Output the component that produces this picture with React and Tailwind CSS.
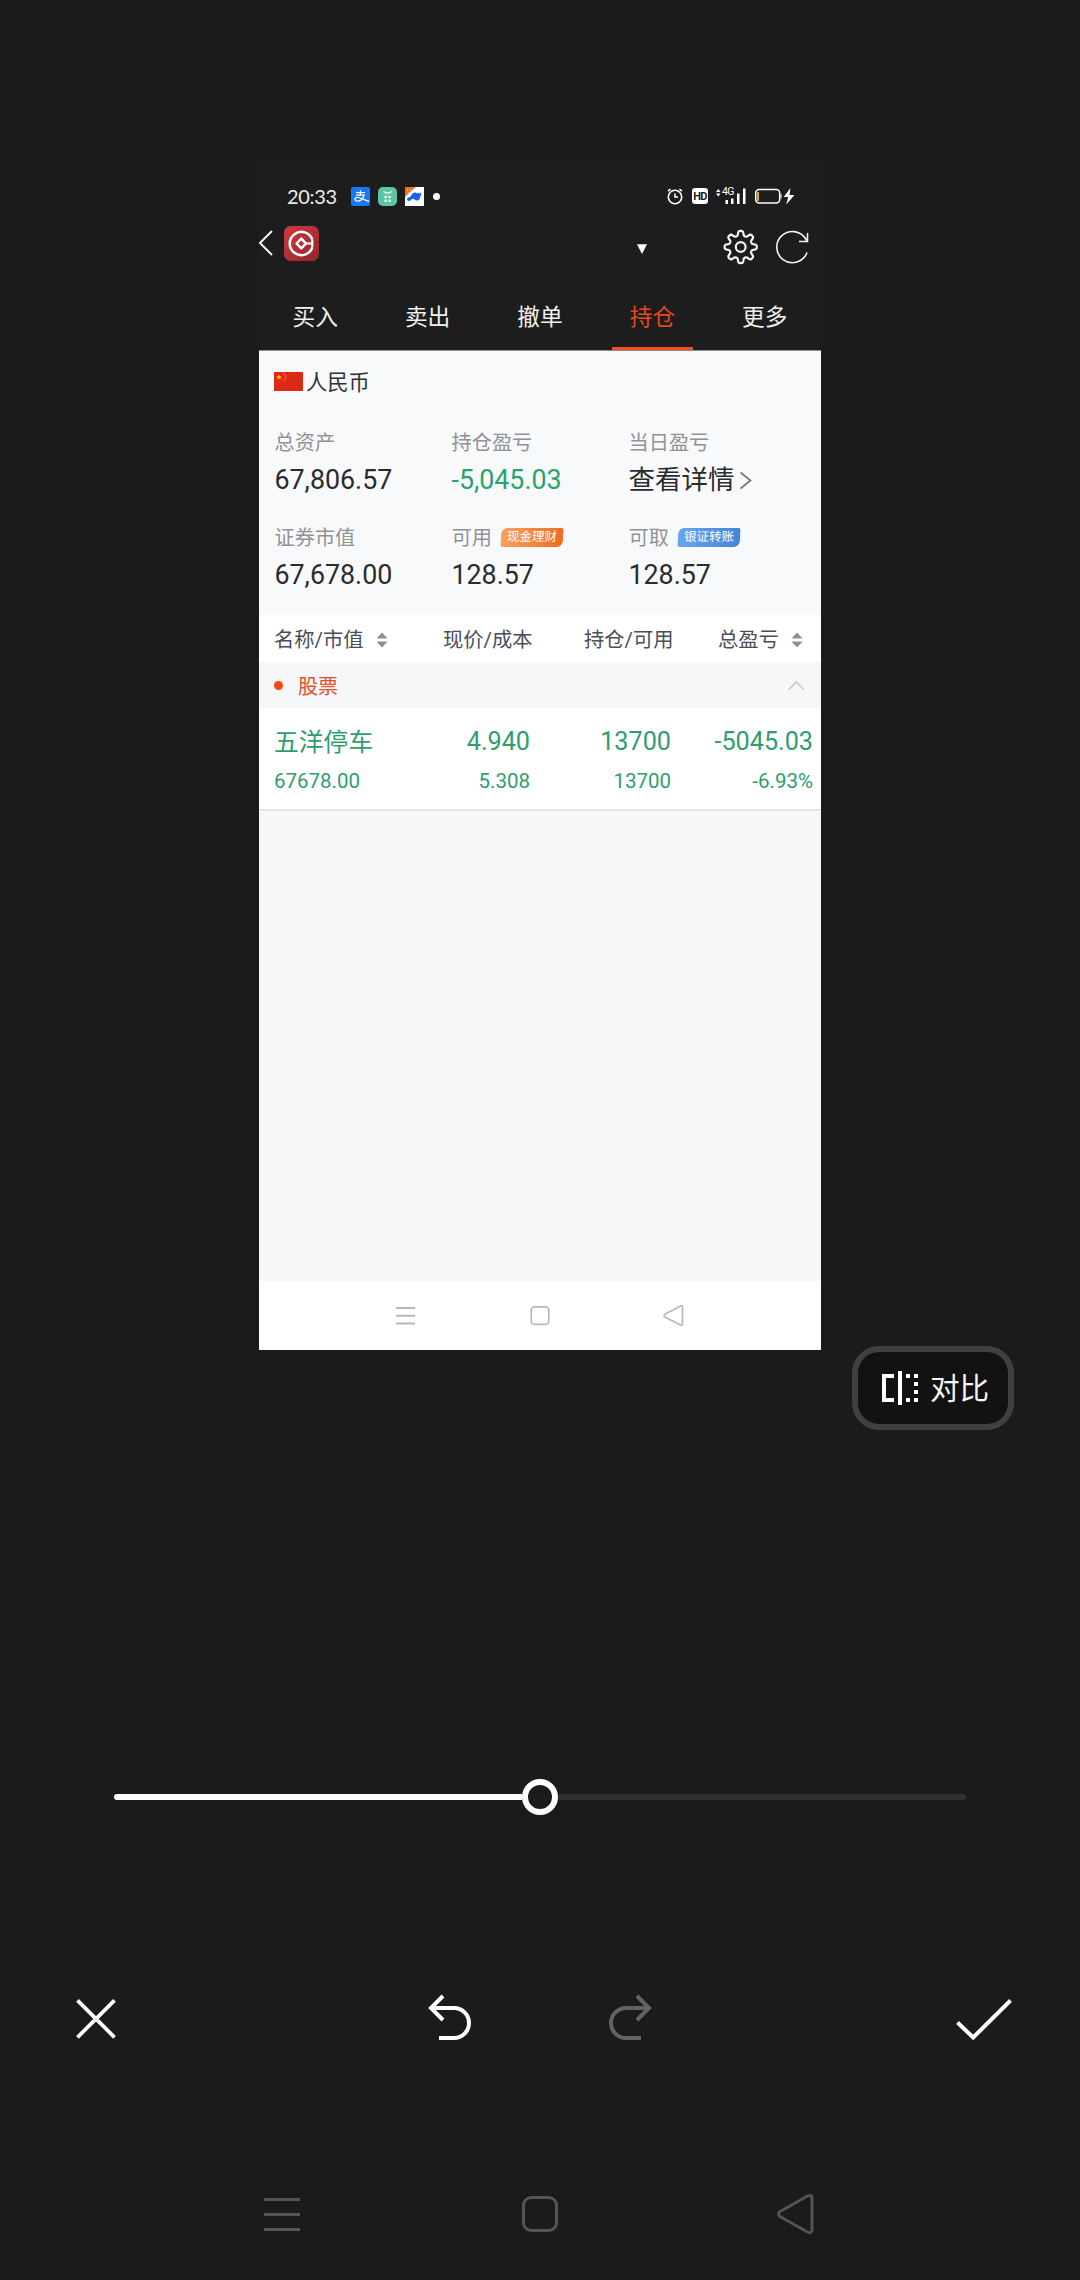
import React from "react";

function Icon({ box, className = "", children }) {
  const [, , w, h] = box;
  return (
    <svg
      width={w}
      height={h}
      viewBox={box.join(" ")}
      className={"block shrink-0 " + className}
      fill="none"
      stroke="currentColor"
    >
      {children}
    </svg>
  );
}

function StatusBar() {
  return (
    <div className="flex h-[60px] items-start pt-[22px] pl-7">
      <div className="w-16 font-[Lato] text-[20px] leading-6 tracking-[-0.3px] whitespace-nowrap text-[#ededed]">20:33</div>
      <div className="flex items-center gap-2 pt-[3px]">
        <Icon box={[0, 0, 19, 19]} className="text-white">
          <rect width="19" height="19" rx="2" fill="#1677ff" stroke="none" />
          <path d="M5 5.600h9M9.500 3.200v5M5.200 8.200h8c-.6 2.400-3 5.600-6.200 6-3.600.2-4.300-3.200-1.300-3.700 2.800-.4 6.500 2.500 12.500 3.800" strokeWidth="1.300" />
        </Icon>
        <Icon box={[0, 0, 19, 19]} className="text-[#eafff7]">
          <rect width="19" height="19" rx="5" fill="#5ec5a3" stroke="none" />
          <path d="M5.500 4.500c1.500 2 6.500 2 8 0" strokeWidth="1.300" />
          <g fill="currentColor" stroke="none">
            <rect x="6.300" y="8.800" width="2.600" height="2.400" rx="1" />
            <rect x="10.200" y="8.800" width="2.600" height="2.400" rx="1" />
            <rect x="6.300" y="12.600" width="2.600" height="2.400" rx="1" />
            <rect x="10.200" y="12.600" width="2.600" height="2.400" rx="1" />
          </g>
        </Icon>
        <Icon box={[0, 0, 19, 19]}>
          <rect width="19" height="19" fill="#fff" stroke="none" />
          <path d="M0 0h10.500L0 10z" fill="#f0701c" stroke="none" />
          <path d="M2 3h1m2 0h1M3 6h1" stroke="#ffd2a8" />
          <path d="M6 9c1.200-2.800 3.200-4 5-3.200l1.500.8 1.200-1.200.5 1 2-.8-.4 1.800 1 .4-1.600 1.500c.2 3.200-2 4.700-4.200 4.100-1-.3-1.600-1.300-2.800-1.600-1.600-.4-2 1.600-3.800 2.200-1.700.2-2.600-1-2.200-2.400.4-1.200 1.600-1 2.400-1.300z" fill="#1463ee" stroke="none" />
        </Icon>
        <span className="ml-px block size-[7px] rounded-full bg-white" />
      </div>
      <div className="ml-auto flex items-center pt-[3px] pr-[25px] text-white">
        <Icon box={[667, 188, 16, 17]} className="mr-[9px]">
          <circle cx="675" cy="197" r="6.700" strokeWidth="1.600" />
          <path d="M675 193.500v3.500h3M668 191.200l2.500-2M682 191.200l-2.500-2" strokeWidth="1.500" />
        </Icon>
        <div className="mr-2 flex h-4 w-4 items-center justify-center rounded-[3px] bg-white font-[Roboto] text-[11px] leading-none font-bold tracking-[-0.6px] text-[#1d1d1d]">HD</div>
        <div className="relative">
          <Icon box={[715, 187, 30, 18]}>
            <g fill="currentColor" stroke="none">
              <path d="M715 192l2.300-3 2.300 3zM715 193.500h4.600l-2.300 3z" />
              <rect x="724.500" y="200" width="2.500" height="4" />
              <rect x="730" y="198.500" width="2.500" height="5.500" />
              <rect x="736" y="193.500" width="2.500" height="10.500" />
              <rect x="742" y="188.500" width="2.500" height="15.500" />
            </g>
          </Icon>
          <span className="absolute top-0 left-[6px] font-[Roboto] text-[10.500px] leading-none tracking-[-0.6px]">4G</span>
        </div>
        <Icon box={[753, 188, 42, 17]} className="ml-2">
          <rect x="754.700" y="189.500" width="24" height="13.500" rx="3.500" strokeWidth="1.500" />
          <path d="M757 192v9" stroke="#e8bf2a" strokeWidth="1.800" />
          <path d="M780 194v4.500" strokeWidth="1" />
          <path d="M789.500 188l-6.800 9h4.500l-2 7.500 8.300-9.500h-5z" fill="currentColor" stroke="none" />
        </Icon>
      </div>
    </div>
  );
}

function gearPath(cx, cy) {
  let d = "";
  const n = 128;
  for (let i = 0; i < n; i++) {
    const a = (i / n) * Math.PI * 2;
    const c = Math.cos(8 * a);
    const r = 13.8 + 2.3 * Math.tanh(2 * c) / Math.tanh(2);
    d += (i ? "L" : "M") + (cx + r * Math.sin(a)).toFixed(2) + " " + (cy - r * Math.cos(a)).toFixed(2);
  }
  return d + "z";
}

function TitleBar() {
  return (
    <div className="flex h-[60px] items-start pt-[3px] text-[#f2f2f2]">
      <Icon box={[259, 229, 14, 28]} className="mt-1">
        <path d="M272 231l-12 12 12 12" strokeWidth="2" />
      </Icon>
      <Icon box={[0, 0, 35, 35]} className="mt-px ml-[11px] text-white">
        <defs>
          <linearGradient id="logo" x1="0" y1="0" x2="1" y2="1">
            <stop stopColor="#d2393f" />
            <stop offset="1" stopColor="#8f272b" />
          </linearGradient>
        </defs>
        <rect width="35" height="35" rx="6.500" fill="url(#logo)" stroke="none" />
        <path d="M28.300 21.300A11.600 11.600 0 1 1 28.300 13.700" strokeWidth="2.500" />
        <path d="M28.300 13.700v7.600" strokeWidth="2.200" />
        <path d="M17.300 12.600l4.700 4.900-4.700 4.900-4.700-4.900z" strokeWidth="2.500" strokeLinejoin="round" />
        <path d="M22 17.500h7" strokeWidth="2.200" />
      </Icon>
      <Icon box={[637, 244, 10, 10]} className="mt-[19px] ml-[318px] text-white">
        <path d="M637 244.300h10l-5 9.700z" fill="currentColor" stroke="none" />
      </Icon>
      <Icon box={[723, 229, 36, 36]} className="mt-1 ml-[76px]">
        <path d={gearPath(740.700, 247)} strokeWidth="2.200" strokeLinejoin="round" />
        <circle cx="740.700" cy="247" r="4.900" strokeWidth="2.200" />
      </Icon>
      <Icon box={[775, 229, 34, 36]} className="mt-1 ml-4">
        <path d="M807 252.500a15.600 15.600 0 1 1-.5-12M807.500 233v8.500h-8.500" strokeWidth="1.600" />
      </Icon>
    </div>
  );
}

const tabs = ["买入", "卖出", "撤单", "持仓", "更多"];

function Tabs() {
  return (
    <div className="grid h-[68px] grid-cols-5 text-[22.700px] leading-8">
      {tabs.map((t) => (
        <div
          key={t}
          className={
            "flex flex-col items-center justify-between pt-5 " + (t === "持仓" ? "text-[#e8481c]" : "text-[#f0f0f0]")
          }
        >
          <span>{t}</span>
          {t === "持仓" && <span className="block h-[3px] w-[81px] bg-[#f04e23]" />}
        </div>
      ))}
    </div>
  );
}

function Badge({ children, blue }) {
  return (
    <span
      className={
        "-mt-[2px] ml-[9px] flex h-[19px] w-[62px] items-center justify-center rounded-tl-[6px] rounded-tr-[2px] rounded-br-[6px] rounded-bl-[2px] bg-linear-to-r text-[12.500px] leading-none text-white -skew-x-3 " +
        (blue ? "from-[#68a5f0] to-[#4385d6]" : "from-[#fba05e] to-[#f26a1b]")
      }
    >
      {children}
    </span>
  );
}

function Metric({ label, value, badge, blue, green, link }) {
  return (
    <div className="h-[95px]">
      <div className="flex h-[30px] items-center text-[20.200px] text-[#929296]">
        {label}
        {badge && <Badge blue={blue}>{badge}</Badge>}
      </div>
      <div
        className={
          "mt-1 flex h-9 items-center whitespace-nowrap " +
          (link ? "text-[26.500px] " : "text-[26.800px] ") +
          (green ? "text-[#2aa36b]" : "text-[#2b2b2d]")
        }
      >
        {value}
        {link && (
          <Icon box={[739, 469, 13, 19]} className="ml-1 text-[#77777a]">
            <path d="M740.500 470.500l10 8-10 8" strokeWidth="1.700" />
          </Icon>
        )}
      </div>
    </div>
  );
}

function Summary() {
  return (
    <div className="h-[265px] border-t border-[#8f8f92] bg-[#f7f9fb] pl-[15px]">
      <div className="flex h-[60px] items-center pt-1">
        <Icon box={[0, 0, 29, 19]} className="-mt-1">
          <rect width="29" height="19" fill="#dc2a14" stroke="none" />
          <path d="M5 2.200l.8 2h2.100L6.200 5.500l.6 2.100L5 6.400 3.200 7.600l.6-2.100-1.700-1.300h2.100z" fill="#ffc81e" stroke="none" />
          <path d="M9.300 2h1.200M11 3.800h1.200M11 6.200h1.200M9.300 8.200h1.200" stroke="#f5a31e" strokeWidth="1.300" />
        </Icon>
        <span className="ml-[3px] text-[21.300px] text-[#333335]">人民币</span>
      </div>
      <div className="grid grid-cols-[177px_177px_177px] pt-[17px] pl-[0.5px]">
        <Metric label="总资产" value="67,806.57" />
        <Metric label="持仓盈亏" value="-5,045.03" green />
        <Metric label="当日盈亏" value="查看详情" link />
        <Metric label="证券市值" value="67,678.00" />
        <Metric label="可用" value="128.57" badge="现金理财" />
        <Metric label="可取" value="128.57" badge="银证转账" blue />
      </div>
    </div>
  );
}

function SortIcon() {
  return (
    <Icon box={[0, 0, 12, 16]} className="ml-3 text-[#8e8e92]">
      <path d="M.5 6.500L6 .5l5.500 6zM.5 9.500h11l-5.500 6z" fill="currentColor" stroke="none" />
    </Icon>
  );
}

function Holdings() {
  return (
    <>
      <div className="flex h-[47px] items-center bg-white pt-[3px] pl-[15px] text-[20.300px] whitespace-nowrap text-[#4a4e5a]">
        <span className="flex w-[169px] items-center">名称/市值<SortIcon /></span>
        <span className="w-[141px]">现价/成本</span>
        <span className="w-[134px]">持仓/可用</span>
        <span className="flex items-center">总盈亏<SortIcon /></span>
      </div>
      <div className="flex h-[46px] items-center bg-[#f6f7f9] pr-4 pl-[15px]">
        <span className="block size-[9px] rounded-full bg-[#f5470f]" />
        <span className="mt-[3px] ml-[15px] text-[20px] text-[#e2502a]">股票</span>
        <Icon box={[788, 680, 17, 11]} className="ml-auto text-[#cbcccf]">
          <path d="M788.500 690l7.800-8 7.800 8" strokeWidth="1.700" />
        </Icon>
      </div>
      <div className="grid h-[103px] grid-cols-[145px_111px_141px_142px] content-start border-b-2 border-[#e3e5e6] bg-white pt-[18px] pl-[15px] text-right whitespace-nowrap text-[#2f9e6c]">
        <span className="h-8 pt-px text-left text-[24.800px] leading-8">五洋停车</span>
        <span className="text-[25.200px] leading-8">4.940</span>
        <span className="text-[25.200px] leading-8">13700</span>
        <span className="text-[25.200px] leading-8">-5045.03</span>
        <span className="mt-2 text-left text-[20.500px] leading-[30px]">67678.00</span>
        <span className="mt-2 text-[20.500px] leading-[30px]">5.308</span>
        <span className="mt-2 text-[20.500px] leading-[30px]">13700</span>
        <span className="mt-2 text-[20.500px] leading-[30px]">-6.93%</span>
      </div>
    </>
  );
}

function PhoneNav() {
  return (
    <div className="flex h-[69px] items-start bg-white pt-[23px] pl-[137px] text-[#b8b8b8]">
      <Icon box={[396, 1304, 19, 23]}>
        <path d="M396 1308h19M396 1315.700h19M396 1323.500h19" strokeWidth="1.900" />
      </Icon>
      <Icon box={[530, 1304, 20, 23]} className="ml-[115px]">
        <rect x="531.200" y="1306.800" width="17.600" height="17.600" rx="3.500" strokeWidth="1.700" />
      </Icon>
      <Icon box={[663, 1304, 21, 23]} className="ml-[113px]">
        <path d="M664.800 1314.300L680.500 1305.900q2-.8 2 1.100v17q0 1.900-2 1.100L664.800 1317q-1.400-1.300 0-2.700z" strokeWidth="1.700" />
      </Icon>
    </div>
  );
}

function Phone() {
  return (
    <div className="ml-[259px] flex h-[1188px] w-[562px] flex-col bg-[#1d1d1d]">
      <StatusBar />
      <TitleBar />
      <Tabs />
      <Summary />
      <Holdings />
      <div className="grow bg-[#f7f8fa]" />
      <PhoneNav />
    </div>
  );
}

function CompareButton() {
  return (
    <button className="-mt-1 ml-[852px] flex h-[84px] w-[162px] shrink-0 items-center rounded-[27px] border-[6px] border-[#404040] bg-[#121212] pl-6 text-[29.600px] text-[#f6f6f6]">
      <Icon box={[882, 1371, 36, 34]} className="text-white">
        <g fill="currentColor" stroke="none" shapeRendering="crispEdges">
          <path d="M882 1374h12v4h-8v20h8v4h-12zM898 1371h4v34h-4z" />
          <path d="M906 1374h4v4h-4zM906 1398h4v4h-4zM914 1374h4v4h-4zM914 1382h4v4h-4zM914 1390h4v4h-4zM914 1398h4v4h-4z" />
        </g>
      </Icon>
      <span className="mt-1 ml-3 leading-none whitespace-nowrap">对比</span>
    </button>
  );
}

function Slider() {
  return (
    <div className="mt-[349px] ml-[114px] flex h-9 w-[852px] shrink-0 items-center">
      <div className="h-1.5 w-[408px] rounded-l-full bg-white" />
      <div className="size-9 rounded-full border-[6px] border-white" />
      <div className="h-1.5 grow rounded-r-full bg-[#303030]" />
    </div>
  );
}

function Actions() {
  return (
    <div className="mt-[179px] flex h-12 shrink-0 items-start pl-[75px] text-white">
      <Icon box={[75, 1994, 42, 48]}>
        <path d="M77.500 2000.300l37 37M114.500 2000.300l-37 37" strokeWidth="3.800" />
      </Icon>
      <Icon box={[427, 1994, 46, 48]} className="ml-[310px]">
        <path d="M443 1996l-12 12 12 12M431 2008h23a15 15 0 0 1 0 30h-15" strokeWidth="4" />
      </Icon>
      <Icon box={[607, 1994, 46, 48]} className="ml-[134px] text-[#626262]">
        <path d="M637 1996l12 12-12 12M649 2008h-23a15 15 0 0 0 0 30h15" strokeWidth="4" />
      </Icon>
      <Icon box={[954, 1994, 60, 48]} className="ml-[301px]">
        <path d="M957.500 2022.500l15.700 15L1010.500 2000.500" strokeWidth="4" />
      </Icon>
    </div>
  );
}

function SystemNav() {
  return (
    <div className="mt-[150px] flex h-11 shrink-0 items-start pl-[264px] text-[#545454]">
      <Icon box={[264, 2192, 36, 44]}>
        <path d="M264 2199.500h36M264 2214.500h36M264 2229.500h36" strokeWidth="3" />
      </Icon>
      <Icon box={[522, 2192, 36, 44]} className="ml-[222px]">
        <rect x="523.500" y="2197.500" width="33" height="33" rx="7.500" strokeWidth="3" />
      </Icon>
      <Icon box={[776, 2192, 40, 44]} className="ml-[218px]">
        <path d="M780 2211.500L807.500 2196q4.500-2 4.500 2.500v31q0 4.500-4.500 2.500L780 2216.500q-3-2.500 0-5z" strokeWidth="3" />
      </Icon>
    </div>
  );
}

export default function App() {
  return (
    <div className="flex h-[2280px] w-[1080px] flex-col overflow-hidden bg-[#1b1b1b] pt-[162px] font-[Roboto,'Noto_Sans_CJK_SC',sans-serif]">
      <Phone />
      <CompareButton />
      <Slider />
      <Actions />
      <SystemNav />
    </div>
  );
}
